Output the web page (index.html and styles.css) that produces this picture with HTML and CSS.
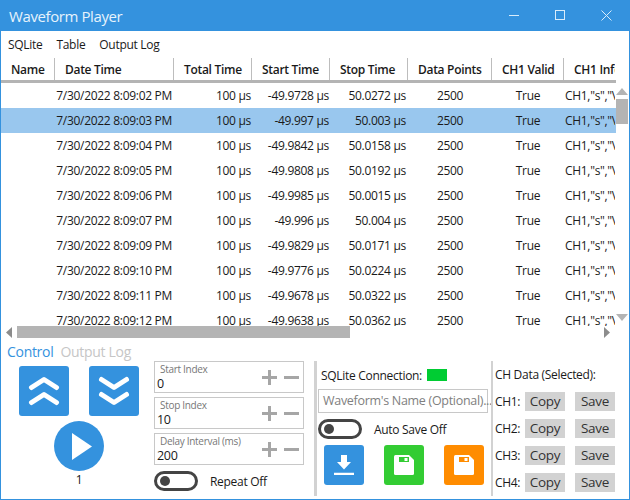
FILE: index.html
```html
<!DOCTYPE html>
<html>
<head>
    <meta charset="UTF-8">
    <title>Waveform Player</title>
    <link rel="stylesheet" href="styles.css">
</head>
<body>
<div class="window">
    <div class="titlebar">
        <span class="title">Waveform Player</span>
        <div class="winbtns">
            <svg width="11" height="11" viewBox="0 0 11 11"><path d="M0 5.5H10" stroke="#d8ecfb" fill="none"/></svg>
            <svg width="11" height="11" viewBox="0 0 11 11"><rect x="0.5" y="0.5" width="9" height="9" stroke="#d8ecfb" fill="none"/></svg>
            <svg width="11" height="11" viewBox="0 0 11 11"><path d="M0.5 0.5L10.5 10.5M10.5 0.5L0.5 10.5" stroke="#d8ecfb" fill="none"/></svg>
        </div>
    </div>
    <div class="menu">
        <span>SQLite</span>
        <span>Table</span>
        <span>Output Log</span>
    </div>
    <div class="table">
        <div class="row head">
            <div class="c1">Name</div><div class="c2">Date Time</div><div class="c3">Total Time</div><div class="c4">Start Time</div><div class="c5">Stop Time</div><div class="c6">Data Points</div><div class="c7">CH1 Valid</div><div class="c8">CH1 Info</div>
        </div>
        <div class="body">
            <div class="rows">
                <div class="row"><div class="c1"></div><div class="c2">7/30/2022 8:09:02 PM</div><div class="c3">100 µs</div><div class="c4">-49.9728 µs</div><div class="c5">50.0272 µs</div><div class="c6">2500</div><div class="c7">True</div><div class="c8">CH1,"s","V</div></div>
                <div class="row sel"><div class="c1"></div><div class="c2">7/30/2022 8:09:03 PM</div><div class="c3">100 µs</div><div class="c4">-49.997 µs</div><div class="c5">50.003 µs</div><div class="c6">2500</div><div class="c7">True</div><div class="c8">CH1,"s","V</div></div>
                <div class="row"><div class="c1"></div><div class="c2">7/30/2022 8:09:04 PM</div><div class="c3">100 µs</div><div class="c4">-49.9842 µs</div><div class="c5">50.0158 µs</div><div class="c6">2500</div><div class="c7">True</div><div class="c8">CH1,"s","V</div></div>
                <div class="row"><div class="c1"></div><div class="c2">7/30/2022 8:09:05 PM</div><div class="c3">100 µs</div><div class="c4">-49.9808 µs</div><div class="c5">50.0192 µs</div><div class="c6">2500</div><div class="c7">True</div><div class="c8">CH1,"s","V</div></div>
                <div class="row"><div class="c1"></div><div class="c2">7/30/2022 8:09:06 PM</div><div class="c3">100 µs</div><div class="c4">-49.9985 µs</div><div class="c5">50.0015 µs</div><div class="c6">2500</div><div class="c7">True</div><div class="c8">CH1,"s","V</div></div>
                <div class="row"><div class="c1"></div><div class="c2">7/30/2022 8:09:07 PM</div><div class="c3">100 µs</div><div class="c4">-49.996 µs</div><div class="c5">50.004 µs</div><div class="c6">2500</div><div class="c7">True</div><div class="c8">CH1,"s","V</div></div>
                <div class="row"><div class="c1"></div><div class="c2">7/30/2022 8:09:09 PM</div><div class="c3">100 µs</div><div class="c4">-49.9829 µs</div><div class="c5">50.0171 µs</div><div class="c6">2500</div><div class="c7">True</div><div class="c8">CH1,"s","V</div></div>
                <div class="row"><div class="c1"></div><div class="c2">7/30/2022 8:09:10 PM</div><div class="c3">100 µs</div><div class="c4">-49.9776 µs</div><div class="c5">50.0224 µs</div><div class="c6">2500</div><div class="c7">True</div><div class="c8">CH1,"s","V</div></div>
                <div class="row"><div class="c1"></div><div class="c2">7/30/2022 8:09:11 PM</div><div class="c3">100 µs</div><div class="c4">-49.9678 µs</div><div class="c5">50.0322 µs</div><div class="c6">2500</div><div class="c7">True</div><div class="c8">CH1,"s","V</div></div>
                <div class="row"><div class="c1"></div><div class="c2">7/30/2022 8:09:12 PM</div><div class="c3">100 µs</div><div class="c4">-49.9638 µs</div><div class="c5">50.0362 µs</div><div class="c6">2500</div><div class="c7">True</div><div class="c8">CH1,"s","V</div></div>
            </div>
            <div class="vscroll">
                <svg width="12" height="7" viewBox="0 0 12 7"><path d="M6 0L12 7H0Z" fill="#b4b4b4"/></svg>
                <div class="vthumb"></div>
                <svg width="12" height="7" viewBox="0 0 12 7"><path d="M0 0H12L6 7Z" fill="#b4b4b4"/></svg>
            </div>
        </div>
        <div class="hscroll">
            <svg width="6" height="11" viewBox="0 0 6 11"><path d="M6 0V11L0 5.5Z" fill="#8c8c8c"/></svg>
            <div class="htrack"><div class="hthumb"></div></div>
            <svg width="6" height="11" viewBox="0 0 6 11"><path d="M0 0L6 5.5L0 11Z" fill="#8c8c8c"/></svg>
        </div>
    </div>
    <div class="tabs">
        <span class="tab on">Control</span>
        <span class="tab">Output Log</span>
    </div>
    <div class="panel">
        <div class="control">
            <div class="arrows">
                <div class="bigbtn blue">
                    <svg width="32" height="32" viewBox="0 0 32 32"><path d="M3.5 12.5L16 4.5L28.5 12.5M3.5 27.5L16 19.5L28.5 27.5" stroke="#fff" stroke-width="5" stroke-linecap="round" stroke-linejoin="round" fill="none"/></svg>
                </div>
                <div class="bigbtn blue">
                    <svg width="32" height="32" viewBox="0 0 32 32"><path d="M3.5 4.5L16 12.5L28.5 4.5M3.5 19.5L16 27.5L28.5 19.5" stroke="#fff" stroke-width="5" stroke-linecap="round" stroke-linejoin="round" fill="none"/></svg>
                </div>
            </div>
            <div class="play">
                <svg width="20" height="27" viewBox="0 0 20 27"><path d="M0 0L20 13.5L0 27Z" fill="#fff"/></svg>
            </div>
            <div class="count">1</div>
        </div>
        <div class="fields">
            <div class="field">
                <div class="field-text"><div class="field-label">Start Index</div><div class="field-value">0</div></div>
                <span class="plus"></span><span class="minus"></span>
            </div>
            <div class="field">
                <div class="field-text"><div class="field-label">Stop Index</div><div class="field-value">10</div></div>
                <span class="plus"></span><span class="minus"></span>
            </div>
            <div class="field">
                <div class="field-text"><div class="field-label">Delay Interval (ms)</div><div class="field-value">200</div></div>
                <span class="plus"></span><span class="minus"></span>
            </div>
            <div class="toggle-row first">
                <div class="toggle"><span class="knob"></span></div>
                <span>Repeat Off</span>
            </div>
        </div>
        <div class="sqlite">
            <div class="conn"><span>SQLite Connection:</span><span class="led"></span></div>
            <div class="name-input">Waveform's Name (Optional)...</div>
            <div class="toggle-row">
                <div class="toggle"><span class="knob"></span></div>
                <span>Auto Save Off</span>
            </div>
            <div class="save-btns">
                <div class="savebtn blue">
                    <svg width="20" height="20" viewBox="0 0 20 20"><path d="M7 0H13V7H17L10 14.5L3 7H7ZM0 17.7H20V20H0Z" fill="#fff"/></svg>
                </div>
                <div class="savebtn green">
                    <svg width="20" height="20" viewBox="0 0 20 20"><path d="M1.5 0H15L20 5V18.5Q20 20 18.5 20H1.5Q0 20 0 18.5V1.5Q0 0 1.5 0Z" fill="#fff"/><rect x="5" y="2" width="10" height="5" fill="#33cc33"/><rect x="10.5" y="3" width="3" height="3" fill="#fff"/></svg>
                </div>
                <div class="savebtn orange">
                    <svg width="20" height="20" viewBox="0 0 20 20"><path d="M1.5 0H15L20 5V18.5Q20 20 18.5 20H1.5Q0 20 0 18.5V1.5Q0 0 1.5 0Z" fill="#fff"/><rect x="5" y="2" width="10" height="5" fill="#ff8c00"/><rect x="10.5" y="3" width="3" height="3" fill="#fff"/></svg>
                </div>
            </div>
        </div>
        <div class="chdata">
            <div class="ch-title">CH Data (Selected):</div>
            <div class="ch-row"><span class="ch-name">CH1:</span><span class="gbtn">Copy</span><span class="gbtn">Save</span></div>
            <div class="ch-row"><span class="ch-name">CH2:</span><span class="gbtn">Copy</span><span class="gbtn">Save</span></div>
            <div class="ch-row"><span class="ch-name">CH3:</span><span class="gbtn">Copy</span><span class="gbtn">Save</span></div>
            <div class="ch-row"><span class="ch-name">CH4:</span><span class="gbtn">Copy</span><span class="gbtn">Save</span></div>
        </div>
    </div>
</div>
</body>
</html>
```
FILE: styles.css
```css
* {
    box-sizing: border-box;
}
body {
    margin: 0;
    background-color: #fff;
    font-family: "Open Sans", "Noto Sans", sans-serif;
    font-size: 12px;
    letter-spacing: -0.3px;
    color: #1a1a1a;
}
.window {
    width: 630px;
    height: 500px;
    border: 1px solid #3492de;
    border-top: 0;
    overflow: hidden;
}
.titlebar {
    height: 31px;
    background-color: #3492de;
    color: #e6f3fc;
    display: flex;
    align-items: center;
    justify-content: space-between;
    padding-left: 9px;
    margin: 0 -1px;
}
.title {
    font-size: 15px;
    letter-spacing: -0.4px;
}
.winbtns {
    display: flex;
    gap: 35px;
    padding-right: 18px;
    margin-top: -1px;
}
.menu {
    height: 27px;
    display: flex;
    align-items: center;
    gap: 14px;
    padding-left: 7px;
}
.table {
    height: 280px;
}
.row {
    display: flex;
    height: 25px;
    line-height: 25px;
    white-space: nowrap;
}
.row > div {
    flex-shrink: 0;
    padding-right: 1px;
}
.row .c1 { width: 54px; }
.row .c2 { width: 119px; text-align: right; padding-right: 2px; }
.row .c3 { width: 78px; text-align: right; }
.row .c4 { width: 78px; text-align: right; }
.row .c5 { width: 78px; text-align: right; padding-right: 2px; }
.row .c6 { width: 84px; text-align: center; padding-right: 0; }
.row .c7 { width: 72px; text-align: center; padding-right: 0; }
.row .c8 { width: 51px; padding-left: 1px; padding-right: 0; overflow: hidden; }
.head {
    width: 615px;
    height: 25px;
    border-bottom: 3px solid #b4b4b4;
    line-height: 24px;
    font-weight: 600;
}
.row.head > div {
    border-right: 1px solid #bdbdbd;
    text-align: left;
    padding: 0 0 0 10px;
}
.row.head .c8 {
    border-right: 0;
}
.body {
    display: flex;
    height: 243px;
}
.rows {
    width: 615px;
    overflow: hidden;
}
.sel {
    background-color: #99c7ee;
}
.vscroll {
    width: 13px;
    padding: 5px 0;
    display: flex;
    flex-direction: column;
}
.vscroll svg:last-child {
    margin-top: auto;
}
.vthumb {
    width: 12px;
    height: 25px;
    margin-top: 4px;
    background-color: #b4b4b4;
}
.hscroll {
    height: 12px;
    width: 615px;
    display: flex;
    align-items: center;
    padding: 0 6px 0 5px;
}
.htrack {
    flex: 1;
    height: 12px;
    padding: 0 5px;
}
.hthumb {
    width: 333px;
    height: 12px;
    background-color: #b4b4b4;
}
.tabs {
    height: 23px;
    display: flex;
    align-items: center;
    gap: 7px;
    padding-left: 6px;
    padding-top: 3px;
    font-size: 14px;
}
.tab {
    color: #c6c6c6;
}
.tab.on {
    color: #3492de;
}
.panel {
    display: flex;
    height: 135px;
}
.control {
    width: 153px;
    padding-top: 5px;
}
.arrows {
    display: flex;
    gap: 20px;
    padding-left: 18px;
}
.bigbtn {
    width: 50px;
    height: 50px;
    border-radius: 3px;
    display: flex;
    align-items: center;
    justify-content: center;
}
.blue { background-color: #3492de; }
.green { background-color: #33cc33; }
.orange { background-color: #ff8c00; }
.play {
    width: 50px;
    height: 50px;
    border-radius: 50%;
    background-color: #3492de;
    margin: 5px 0 0 53px;
    display: flex;
    align-items: center;
    justify-content: center;
    padding-left: 6px;
}
.count {
    width: 50px;
    margin-left: 53px;
    text-align: center;
    line-height: 17px;
}
.fields {
    width: 160px;
}
.field {
    width: 150px;
    height: 32px;
    border: 1px solid #c8c8c8;
    display: flex;
    align-items: center;
    margin-bottom: 4px;
}
.field-text {
    flex: 1;
    padding-left: 2px;
}
.field-label {
    font-size: 10px;
    line-height: 13px;
    padding-left: 3px;
    color: #777;
}
.field-value {
    font-size: 12.5px;
    line-height: 15px;
}
.plus {
    width: 15px;
    height: 15px;
    margin-right: 7px;
    background:
        linear-gradient(#a6a6a6, #a6a6a6) center / 15px 3px no-repeat,
        linear-gradient(#a6a6a6, #a6a6a6) center / 3px 15px no-repeat;
}
.minus {
    width: 15px;
    height: 3px;
    margin-right: 4px;
    background-color: #a6a6a6;
}
.toggle-row {
    display: flex;
    align-items: center;
    gap: 12px;
    height: 20px;
}
.toggle-row.first {
    margin-top: 6px;
}
.toggle {
    width: 44px;
    height: 20px;
    border: 3px solid #444;
    border-radius: 10px;
    padding: 2px 0 0 3px;
}
.knob {
    display: block;
    width: 10px;
    height: 10px;
    border-radius: 50%;
    background-color: #444;
}
.sqlite {
    width: 177px;
    border-left: 3px solid #d2d2d2;
    padding-left: 1px;
    padding-right: 3px;
    height: 135px;
}
.conn {
    display: flex;
    align-items: center;
    gap: 5px;
    height: 28px;
    padding-left: 3px;
}
.led {
    width: 20px;
    height: 12px;
    background-color: #00cc33;
}
.name-input {
    height: 24px;
    border: 1px solid #c8c8c8;
    line-height: 22px;
    padding-left: 4px;
    font-size: 12.5px;
    color: #808080;
    white-space: nowrap;
    margin-bottom: 6px;
}
.sqlite .toggle-row {
    margin-bottom: 6px;
}
.save-btns {
    display: flex;
    gap: 20px;
    padding-left: 6px;
}
.savebtn {
    width: 40px;
    height: 40px;
    border-radius: 3px;
    display: flex;
    align-items: center;
    justify-content: center;
}
.chdata {
    flex: 1;
    border-left: 2px solid #d2d2d2;
    padding-left: 2px;
    height: 135px;
}
.ch-title {
    height: 27px;
    line-height: 27px;
}
.ch-row {
    display: flex;
    align-items: center;
    height: 27px;
}
.ch-name {
    width: 30px;
}
.gbtn {
    width: 40px;
    height: 19px;
    line-height: 19px;
    text-align: center;
    background-color: #d2d2d2;
    color: #333;
    font-size: 13.5px;
    margin-right: 10px;
}
```
